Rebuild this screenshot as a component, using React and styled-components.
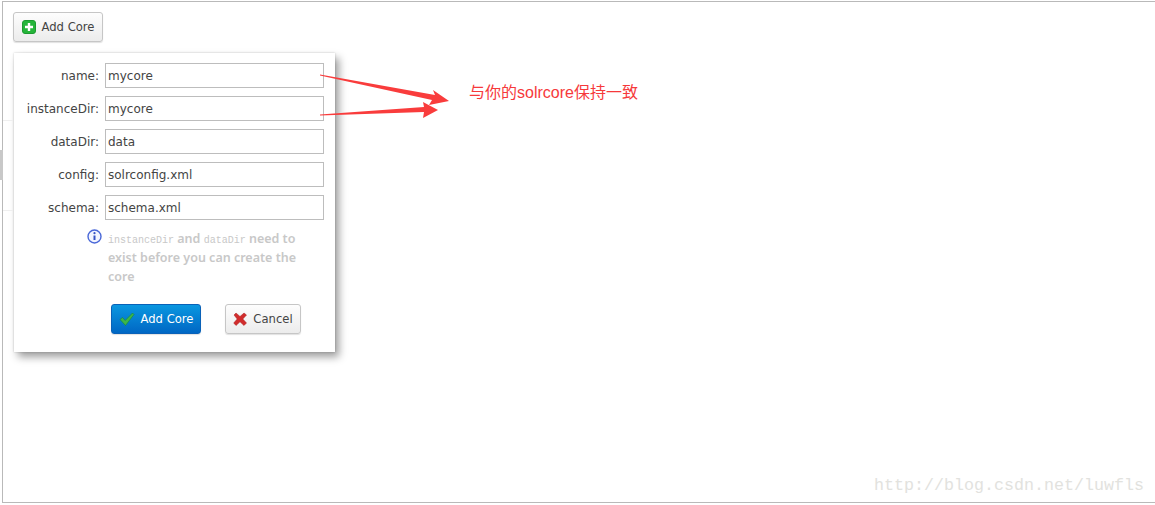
import React from "react";
import styled, { createGlobalStyle } from "styled-components";

const GlobalStyle = createGlobalStyle`
  html, body {
    margin: 0;
    padding: 0;
    background: #fff;
    overflow: hidden;
  }
`;

const Frame = styled.div`
  position: relative;
  box-sizing: border-box;
  width: 1153px;
  height: 502px;
  margin: 1px 0 0 2px;
  padding: 10px 0 0 10px;
  border: 1px solid #b9b9b9;
  border-right: 0;
  font-family: "DejaVu Sans", Tahoma, sans-serif;
  font-size: 12px;
  color: #444;
`;

const Button = styled.button`
  display: inline-flex;
  align-items: center;
  justify-content: center;
  gap: 6px;
  box-sizing: border-box;
  width: ${(p) => p.$width}px;
  height: 30px;
  padding: 0;
  border: 1px solid ${(p) => (p.$primary ? "#0a62b8" : "#c6c6c6")};
  border-radius: 3px;
  background: ${(p) =>
    p.$primary
      ? "linear-gradient(#0a97e0, #0067c4)"
      : "linear-gradient(#fdfdfd, #ececec)"};
  box-shadow: 0 1px 1px rgba(0, 0, 0, 0.12);
  font: inherit;
  font-size: 11.6px;
  color: ${(p) => (p.$primary ? "#fff" : "#444")};
`;

const Popup = styled.div`
  box-sizing: border-box;
  width: 321px;
  height: 299px;
  margin: 11px 0 0 1px;
  padding: 10px 11px 0 0;
  background: #fff;
  box-shadow: 0 0 2px rgba(0, 0, 0, 0.2), 4px 5px 8px rgba(0, 0, 0, 0.38);
`;

const Field = styled.div`
  display: flex;
  align-items: center;
  justify-content: flex-end;
  gap: 6px;
  height: 25px;
  margin-bottom: 8px;
`;

const Label = styled.label`
  flex: 1;
  text-align: right;
`;

const Input = styled.input`
  box-sizing: border-box;
  width: 219px;
  height: 25px;
  padding: 0 2px;
  border: 1px solid #bdbdbd;
  border-radius: 0;
  outline: 0;
  font: inherit;
  color: #444;
`;

const Note = styled.div`
  display: flex;
  gap: 6px;
  margin: 9px 25px 0 73px;
`;

const NoteIcon = styled.svg`
  flex: none;
  width: 15px;
  height: 15px;
`;

const NoteText = styled.p`
  margin: 0;
  font-family: "Noto Sans", sans-serif;
  font-size: 12.5px;
  font-weight: 600;
  line-height: 19px;
  color: #c8c8c8;
`;

const Code = styled.code`
  font-family: "Liberation Mono", monospace;
  font-size: 10px;
  font-weight: 400;
  line-height: 1;
`;

const Actions = styled.div`
  display: flex;
  gap: 24px;
  margin: 18px 0 0 97px;
`;

const Arrows = styled.svg`
  position: absolute;
  left: 317px;
  top: 70px;
  width: 136px;
  height: 52px;
`;

const Annotation = styled.span`
  position: absolute;
  left: 466px;
  top: 77px;
  font-family: "Liberation Sans", "Noto Sans CJK SC", sans-serif;
  font-size: 16px;
  color: #f6393b;
  white-space: nowrap;
`;

const Watermark = styled.span`
  position: absolute;
  left: 871px;
  top: 474px;
  font-family: "Liberation Mono", monospace;
  font-size: 16.67px;
  color: #e2e2de;
  white-space: nowrap;
`;

const EdgeBlock = styled.div`
  position: absolute;
  left: -3px;
  top: 148px;
  width: 3px;
  height: 30px;
  background: #c8c8c8;
`;

const EdgeRule = styled.div`
  position: absolute;
  left: 0;
  top: ${(p) => p.$top}px;
  width: 10px;
  height: 1px;
  background: #efefef;
`;

const PlusIcon = () => (
  <svg width="14" height="14" viewBox="0 0 14 14">
    <rect x="0.5" y="0.5" width="13" height="13" rx="2.5" fill="#25b53a" stroke="#1c9a30" />
    <path d="M7 3v8M3 7h8" stroke="#fff" strokeWidth="2.4" />
  </svg>
);

const CheckIcon = () => (
  <svg width="16" height="14" viewBox="0 0 16 14">
    <path d="M1 7.5 3.5 5.5 6.2 8.5 13.5 1 15 2.5 6.5 13.5Z" fill="#3cb54a" stroke="#16883a" strokeWidth="0.6" />
  </svg>
);

const CrossIcon = () => (
  <svg width="14" height="14" viewBox="0 0 14 14">
    <path d="M1 3 3 1 7 4.5 11 1 13.5 3 9.8 7 13.5 11 11 13.5 7 9.8 3 13.5 .7 11 4.2 7Z" fill="#d12c2c" stroke="#a81c1c" strokeWidth="0.5" />
  </svg>
);

const fields = [
  ["name", "mycore"],
  ["instanceDir", "mycore"],
  ["dataDir", "data"],
  ["config", "solrconfig.xml"],
  ["schema", "schema.xml"],
];

export default function App() {
  return (
    <>
      <GlobalStyle />
      <Frame>
        <EdgeBlock />
        <EdgeRule $top={118} />
        <EdgeRule $top={208} />
        <Button $width={90}>
          <PlusIcon />
          Add Core
        </Button>
        <Popup>
          {fields.map(([name, value]) => (
            <Field key={name}>
              <Label>{name}:</Label>
              <Input defaultValue={value} />
            </Field>
          ))}
          <Note>
            <NoteIcon viewBox="0 0 15 15">
              <circle cx="7.5" cy="7.5" r="6.5" fill="#f2f5ff" stroke="#4a68d8" strokeWidth="1.4" />
              <path d="M7.5 6.5v4.5" stroke="#3653c4" strokeWidth="2" />
              <circle cx="7.5" cy="4.2" r="1.1" fill="#3653c4" />
            </NoteIcon>
            <NoteText>
              <Code>instanceDir</Code> and <Code>dataDir</Code> need to exist before you can create the core
            </NoteText>
          </Note>
          <Actions>
            <Button $primary $width={90}>
              <CheckIcon />
              Add Core
            </Button>
            <Button $width={76}>
              <CrossIcon />
              Cancel
            </Button>
          </Actions>
        </Popup>
        <Arrows viewBox="320 73 136 52">
          <path d="M320 75.5 435 96 433 91 449 102 429 106 432 101 320 76.5Z" fill="#f93c3c" />
          <path d="M320 115.5 424 108 423 103 438 111 423 119 424 113 320 116.5Z" fill="#f93c3c" />
        </Arrows>
        <Annotation>与你的solrcore保持一致</Annotation>
        <Watermark>http://blog.csdn.net/luwfls</Watermark>
      </Frame>
    </>
  );
}
